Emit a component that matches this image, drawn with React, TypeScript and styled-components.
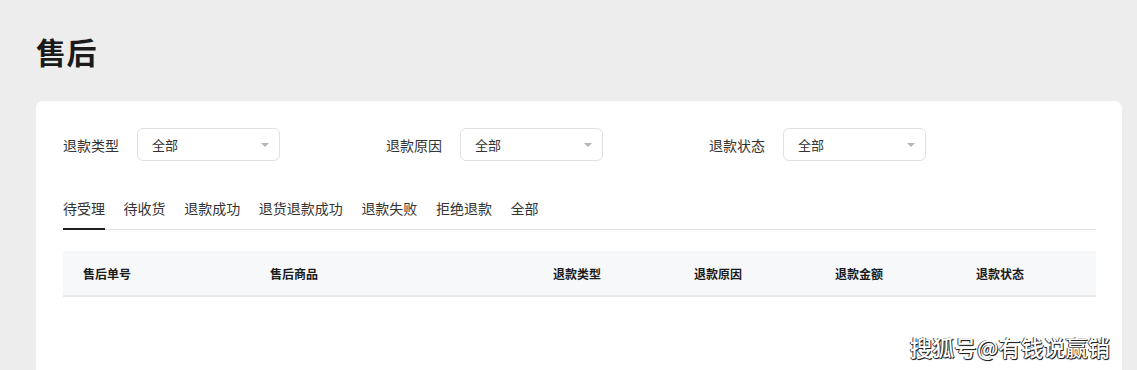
import React from "react";
import styled, { createGlobalStyle } from "styled-components";

const GlobalStyle = createGlobalStyle`
  html, body { margin: 0; padding: 0; background: #ededed; }
  body {
    font-family: "Noto Sans CJK SC", "Noto Sans", sans-serif;
    color: #1f1f1f;
    overflow: hidden;
  }
`;

const Page = styled.div`
  position: relative;
  width: 1137px;
  height: 370px;
  padding: 0 15px 0 36px;
  box-sizing: border-box;
  display: flex;
  flex-direction: column;
`;

const Title = styled.h1`
  margin: 28px 0 0;
  height: 46px;
  font-size: 30px;
  font-weight: 700;
  line-height: 46px;
  color: #1a1a1a;
  letter-spacing: 0.5px;
`;

const Card = styled.div`
  margin-top: 27px;
  flex: 1;
  background: #fff;
  border-radius: 7px 7px 0 0;
  padding: 27px 26px 0 27px;
`;

const Filters = styled.div`
  display: flex;
  height: 33px;
`;

const FilterGroup = styled.div`
  width: 323px;
  display: flex;
  align-items: center;
`;

const FilterLabel = styled.span`
  width: 74px;
  font-size: 14px;
  color: #333;
`;

const Select = styled.div`
  width: 143px;
  height: 33px;
  box-sizing: border-box;
  border: 1px solid #dfe1e6;
  border-radius: 6px;
  display: flex;
  align-items: center;
  justify-content: space-between;
  padding: 0 10px 0 14px;
  font-size: 13px;
  color: #333;
`;

const Arrow = styled.span`
  width: 0;
  height: 0;
  border-left: 4px solid transparent;
  border-right: 4px solid transparent;
  border-top: 4px solid #b5b5b5;
  margin-top: 1px;
`;

const Tabs = styled.div`
  margin-top: 34px;
  display: flex;
  gap: 18.6px;
  border-bottom: 1px solid #e4e4e4;
`;

const Tab = styled.div<{ $active?: boolean }>`
  font-size: 14px;
  color: #333;
  height: 34px;
  line-height: 26px;
  box-sizing: border-box;
  position: relative;
  &::after {
    content: "";
    position: absolute;
    left: 0;
    right: 0;
    bottom: -1px;
    height: 2px;
    background: ${(p) => (p.$active ? "#1f1f1f" : "transparent")};
  }
`;

const TableHead = styled.div`
  margin-top: 21px;
  height: 44px;
  background: #f7f8fa;
  border-bottom: 2px solid #e8e8e8;
  display: grid;
  grid-template-columns: 187px 283px 141px 141px 141px 1fr;
  align-items: center;
`;

const Th = styled.div`
  padding-left: 20px;
  font-size: 12px;
  font-weight: 700;
  color: #1a1a1a;
`;

const Watermark = styled.div`
  position: absolute;
  left: 910px;
  top: 330px;
  font-size: 22px;
  font-weight: 500;
  color: #fff;
  letter-spacing: 0.3px;
  text-shadow: 1px 1px 0 #222, -1px 0 0 #444, 0 1px 1px #333;
  white-space: nowrap;
`;

const filters = ["退款类型", "退款原因", "退款状态"];
const tabs = ["待受理", "待收货", "退款成功", "退货退款成功", "退款失败", "拒绝退款", "全部"];
const cols = ["售后单号", "售后商品", "退款类型", "退款原因", "退款金额", "退款状态"];

export default function App() {
  return (
    <>
      <GlobalStyle />
      <Page>
        <Title>售后</Title>
        <Card>
          <Filters>
            {filters.map((f) => (
              <FilterGroup key={f}>
                <FilterLabel>{f}</FilterLabel>
                <Select>
                  <span>全部</span>
                  <Arrow />
                </Select>
              </FilterGroup>
            ))}
          </Filters>
          <Tabs>
            {tabs.map((t, i) => (
              <Tab key={t} $active={i === 0}>
                {t}
              </Tab>
            ))}
          </Tabs>
          <TableHead>
            {cols.map((c) => (
              <Th key={c}>{c}</Th>
            ))}
          </TableHead>
        </Card>
        <Watermark>搜狐号@有钱说赢销</Watermark>
      </Page>
    </>
  );
}
